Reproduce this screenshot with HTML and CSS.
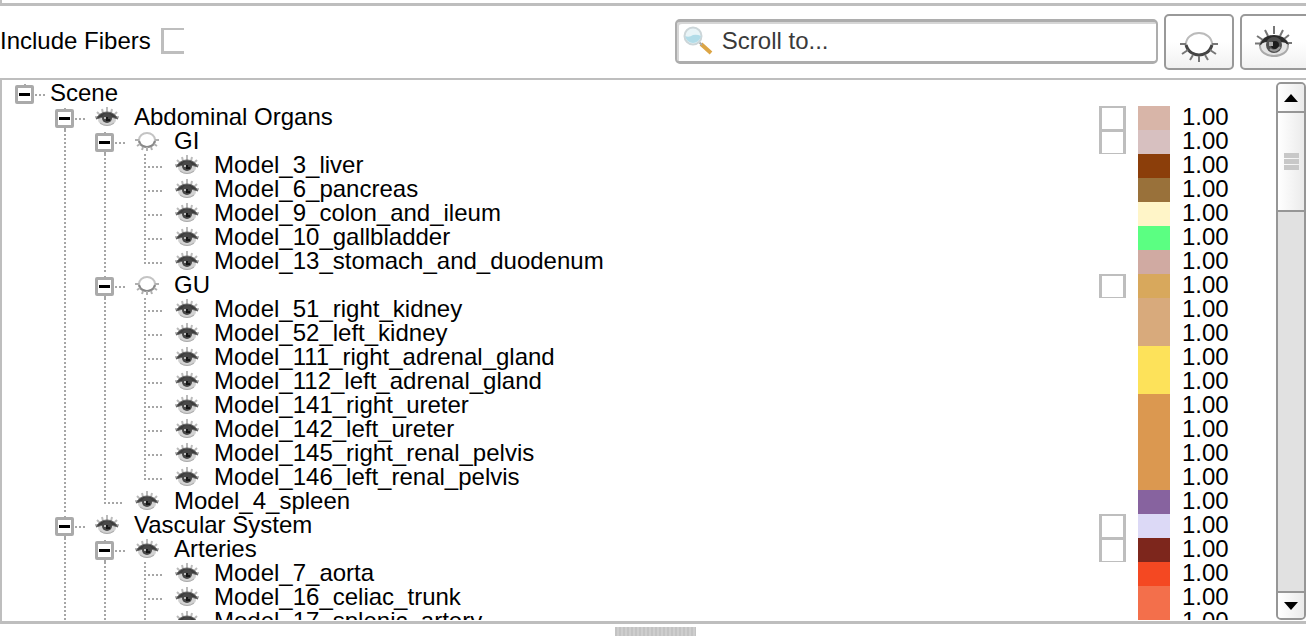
FILE: index.html
```
<!DOCTYPE html>
<html lang="en">
<head>
<meta charset="utf-8">
<title>Scene tree</title>
<link rel="stylesheet" href="styles.css">
</head>
<body>
<svg class="defs" aria-hidden="true">
  <symbol id="eye-large" viewBox="0 0 38 32">
    <ellipse cx="20" cy="20" rx="14" ry="10" fill="#e4e4e4" stroke="#aaa" stroke-width="2"/>
    <path d="M1 17.500h7M3 10l6 4M11 4l3 6M20 0v8M29 4l-3 6M35 9l-5 4M32 17h6" stroke="#777" stroke-width="2"/>
    <path d="M5 20 Q9 9 20 9 Q31 9 35 19 Q31 16 27 16 H13 Q9 16 5 20Z" fill="#2b2b2b"/>
    <circle cx="20" cy="19" r="8" fill="#505050"/>
    <circle cx="21" cy="19" r="4" fill="#1c1c1c"/>
    <path d="M15 16h4v4h-4z" fill="#aaa"/>
    <path d="M16 23 Q21 27 26 21" fill="none" stroke="#999" stroke-width="2"/>
  </symbol>
  <symbol id="closed-large" viewBox="0 0 38 32">
    <ellipse cx="19" cy="13" rx="13" ry="11" fill="#fff" stroke="#bbb" stroke-width="2"/>
    <path d="M6 14 Q8 20 12 22 Q19 26 26 22 Q30 20 32 14" fill="none" stroke="#444" stroke-width="3"/>
    <path d="M0 13h6M32 13h6M2 23l6-4M36 23l-6-4M10 29l3-5M28 29l-3-5M19 25v6" stroke="#777" stroke-width="2"/>
  </symbol>
  <symbol id="eye" viewBox="0 0 24 20">
    <ellipse cx="12" cy="13" rx="9" ry="6" fill="#d2d2d2"/>
    <path d="M0 10h4M2 5l3 3M7 2l1 4M12 0v5M17 2l-1 4M22 5l-3 3M20 10h4" stroke="#bbb" stroke-width="2"/>
    <path d="M1 12 Q5 5 12 5 Q19 5 23 12 Q18 10 12 10 Q6 10 1 12Z" fill="#3c3c3c" stroke="#666"/>
    <circle cx="12" cy="11" r="5" fill="#484848"/>
    <path d="M12 10v3h3" fill="none" stroke="#161616" stroke-width="2"/>
    <path d="M9 10h2v2H9z" fill="#bbb"/>
    <path d="M5 16 Q12 21 19 16" fill="none" stroke="#aaa"/>
  </symbol>
  <symbol id="closed" viewBox="0 0 24 20">
    <ellipse cx="12" cy="9" rx="8" ry="7" fill="#fff" stroke="#c4c4c4" stroke-width="2"/>
    <path d="M4 10 Q5 14 8 15 Q12 17 16 15 Q19 14 20 10" fill="none" stroke="#888" stroke-width="2"/>
    <path d="M0 9h4M20 9h4M2 15l3-2M22 15l-3-2M7 19l1-3M17 19l-1-3M12 16v4" stroke="#b0b0b0" stroke-width="2"/>
  </symbol>
</svg>

<div class="upper-panel"></div>

<header class="toolbar">
  <label class="fibers">Include Fibers <input type="checkbox" class="fibers-box"></label>
  <div class="search">
    <svg class="lens" viewBox="0 0 30 30" aria-hidden="true">
      <path d="M18 18 L28 27" stroke="#dca545" stroke-width="4"/>
      <path d="M15 15 L19 19" stroke="#aaa" stroke-width="2"/>
      <circle cx="10" cy="10" r="8.500" fill="#e9f4f7" stroke="#ccd6d9" stroke-width="2"/>
      <path d="M2 10 Q6 12 10 9 Q14 8 18 10 Q16 17 10 17 Q4 17 2 10Z" fill="#b2dce8"/>
    </svg>
    <input type="text" class="search-input" placeholder="Scroll to..." aria-label="Scroll to">
  </div>
  <button class="tool" aria-label="Hide all"><svg class="tool-icon lower"><use href="#closed-large"/></svg></button>
  <button class="tool last" aria-label="Show all"><svg class="tool-icon"><use href="#eye-large"/></svg></button>
</header>

<main class="scene">
  <ul class="tree" role="tree">
    <li class="row"><button class="cell node root" aria-label="Collapse"></button><span class="name scene-name">Scene</span></li>
    <li class="row"><i class="cell"></i><button class="cell node" aria-label="Collapse"></button><svg class="eye"><use href="#eye"/></svg><span class="name">Abdominal Organs</span><input type="checkbox" class="pick" aria-label="Abdominal Organs"><i class="swatch organs"></i><span class="opacity">1.00</span></li>
    <li class="row"><i class="cell"></i><i class="cell line"></i><button class="cell node" aria-label="Collapse"></button><svg class="eye"><use href="#closed"/></svg><span class="name">GI</span><input type="checkbox" class="pick" aria-label="GI"><i class="swatch gi"></i><span class="opacity">1.00</span></li>
    <li class="row"><i class="cell"></i><i class="cell line"></i><i class="cell line"></i><i class="cell tee"></i><svg class="eye"><use href="#eye"/></svg><span class="name">Model_3_liver</span><i class="swatch liver"></i><span class="opacity">1.00</span></li>
    <li class="row"><i class="cell"></i><i class="cell line"></i><i class="cell line"></i><i class="cell tee"></i><svg class="eye"><use href="#eye"/></svg><span class="name">Model_6_pancreas</span><i class="swatch pancreas"></i><span class="opacity">1.00</span></li>
    <li class="row"><i class="cell"></i><i class="cell line"></i><i class="cell line"></i><i class="cell tee"></i><svg class="eye"><use href="#eye"/></svg><span class="name">Model_9_colon_and_ileum</span><i class="swatch colon"></i><span class="opacity">1.00</span></li>
    <li class="row"><i class="cell"></i><i class="cell line"></i><i class="cell line"></i><i class="cell tee"></i><svg class="eye"><use href="#eye"/></svg><span class="name">Model_10_gallbladder</span><i class="swatch gallbladder"></i><span class="opacity">1.00</span></li>
    <li class="row"><i class="cell"></i><i class="cell line"></i><i class="cell line"></i><i class="cell elbow"></i><svg class="eye"><use href="#eye"/></svg><span class="name">Model_13_stomach_and_duodenum</span><i class="swatch stomach"></i><span class="opacity">1.00</span></li>
    <li class="row"><i class="cell"></i><i class="cell line"></i><button class="cell node" aria-label="Collapse"></button><svg class="eye"><use href="#closed"/></svg><span class="name">GU</span><input type="checkbox" class="pick" aria-label="GU"><i class="swatch gu"></i><span class="opacity">1.00</span></li>
    <li class="row"><i class="cell"></i><i class="cell line"></i><i class="cell line"></i><i class="cell tee"></i><svg class="eye"><use href="#eye"/></svg><span class="name">Model_51_right_kidney</span><i class="swatch kidney"></i><span class="opacity">1.00</span></li>
    <li class="row"><i class="cell"></i><i class="cell line"></i><i class="cell line"></i><i class="cell tee"></i><svg class="eye"><use href="#eye"/></svg><span class="name">Model_52_left_kidney</span><i class="swatch kidney"></i><span class="opacity">1.00</span></li>
    <li class="row"><i class="cell"></i><i class="cell line"></i><i class="cell line"></i><i class="cell tee"></i><svg class="eye"><use href="#eye"/></svg><span class="name">Model_111_right_adrenal_gland</span><i class="swatch adrenal"></i><span class="opacity">1.00</span></li>
    <li class="row"><i class="cell"></i><i class="cell line"></i><i class="cell line"></i><i class="cell tee"></i><svg class="eye"><use href="#eye"/></svg><span class="name">Model_112_left_adrenal_gland</span><i class="swatch adrenal"></i><span class="opacity">1.00</span></li>
    <li class="row"><i class="cell"></i><i class="cell line"></i><i class="cell line"></i><i class="cell tee"></i><svg class="eye"><use href="#eye"/></svg><span class="name">Model_141_right_ureter</span><i class="swatch ureter"></i><span class="opacity">1.00</span></li>
    <li class="row"><i class="cell"></i><i class="cell line"></i><i class="cell line"></i><i class="cell tee"></i><svg class="eye"><use href="#eye"/></svg><span class="name">Model_142_left_ureter</span><i class="swatch ureter"></i><span class="opacity">1.00</span></li>
    <li class="row"><i class="cell"></i><i class="cell line"></i><i class="cell line"></i><i class="cell tee"></i><svg class="eye"><use href="#eye"/></svg><span class="name">Model_145_right_renal_pelvis</span><i class="swatch ureter"></i><span class="opacity">1.00</span></li>
    <li class="row"><i class="cell"></i><i class="cell line"></i><i class="cell line"></i><i class="cell elbow"></i><svg class="eye"><use href="#eye"/></svg><span class="name">Model_146_left_renal_pelvis</span><i class="swatch ureter"></i><span class="opacity">1.00</span></li>
    <li class="row"><i class="cell"></i><i class="cell line"></i><i class="cell elbow"></i><svg class="eye"><use href="#eye"/></svg><span class="name">Model_4_spleen</span><i class="swatch spleen"></i><span class="opacity">1.00</span></li>
    <li class="row"><i class="cell"></i><button class="cell node" aria-label="Collapse"></button><svg class="eye"><use href="#eye"/></svg><span class="name">Vascular System</span><input type="checkbox" class="pick" aria-label="Vascular System"><i class="swatch vascular"></i><span class="opacity">1.00</span></li>
    <li class="row"><i class="cell"></i><i class="cell line"></i><button class="cell node" aria-label="Collapse"></button><svg class="eye"><use href="#eye"/></svg><span class="name">Arteries</span><input type="checkbox" class="pick" aria-label="Arteries"><i class="swatch arteries"></i><span class="opacity">1.00</span></li>
    <li class="row"><i class="cell"></i><i class="cell line"></i><i class="cell line"></i><i class="cell tee"></i><svg class="eye"><use href="#eye"/></svg><span class="name">Model_7_aorta</span><i class="swatch aorta"></i><span class="opacity">1.00</span></li>
    <li class="row"><i class="cell"></i><i class="cell line"></i><i class="cell line"></i><i class="cell tee"></i><svg class="eye"><use href="#eye"/></svg><span class="name">Model_16_celiac_trunk</span><i class="swatch celiac"></i><span class="opacity">1.00</span></li>
    <li class="row"><i class="cell"></i><i class="cell line"></i><i class="cell line"></i><i class="cell tee"></i><svg class="eye"><use href="#eye"/></svg><span class="name">Model_17_splenic_artery</span><i class="swatch celiac"></i><span class="opacity">1.00</span></li>
  </ul>
  <div class="scrollbar">
    <button class="arrow up" aria-label="Scroll up"><svg class="arrow-icon" viewBox="0 0 14 8"><path d="M7 0L14 8H0Z"/></svg></button>
    <div class="thumb"><i class="ridge"></i><i class="ridge"></i><i class="ridge"></i></div>
    <div class="track"></div>
    <button class="arrow down" aria-label="Scroll down"><svg class="arrow-icon" viewBox="0 0 14 8"><path d="M0 0H14L7 8Z"/></svg></button>
  </div>
</main>
<footer class="splitter"><div class="grip"></div></footer>
</body>
</html>
```
FILE: styles.css
```
*, *::before { box-sizing: border-box; }
body {
  margin: 0;
  height: 100vh;
  display: flex;
  flex-direction: column;
  overflow: hidden;
  background: #fff;
  color: #000;
  font: 24px/22px "Liberation Sans", Arial, sans-serif;
}
button { padding: 0; border: 0; background: none; font: inherit; }
input { margin: 0; }
.defs { display: none; }

.upper-panel { flex: none; height: 6px; border: solid #bebebe; border-width: 0 0 3px 2px; }

/* toolbar */
.toolbar { flex: none; display: flex; align-items: center; gap: 6px; height: 72px; }
.fibers { display: flex; align-items: center; gap: 10px; margin: 0 auto 2px 0; }
.fibers-box {
  appearance: none;
  width: 23px;
  height: 26px;
  border: solid #bebebe;
  border-width: 2px 0 3px 3px;
}
.search {
  display: flex;
  align-items: center;
  width: 37%;
  height: 45px;
  margin-bottom: 2px;
  padding: 0 6px;
  border: solid #adadad;
  border-width: 3px 2px;
  border-radius: 5px;
  box-shadow: inset 2px 2px 0 #d6d6d6;
}
.lens { flex: none; width: 30px; height: 30px; }
.search-input {
  flex: 1;
  min-width: 0;
  height: 30px;
  margin-left: 9px;
  padding: 0;
  border: 0;
  outline: 0;
  background: none;
  font: inherit;
}
.search-input::placeholder { color: #3a3a3a; opacity: 1; }
.tool {
  flex: none;
  display: flex;
  align-items: center;
  justify-content: center;
  width: 70px;
  height: 56px;
  border: 2px solid #999;
  border-radius: 5px;
  background: linear-gradient(#fff 50%, #f1f1f1);
}
.tool.last { margin-right: -4px; }
.tool-icon { width: 38px; height: 32px; margin-right: 4px; }
.tool-icon.lower { margin: 10px 0 0; }

/* scene panel */
.scene {
  flex: 1;
  min-height: 0;
  display: flex;
  padding: 2px 0 1px;
  border: solid #bebebe;
  border-width: 2px 0 3px 2px;
}
.tree { flex: 1; min-width: 0; margin: 0; padding: 0 0 0 3px; overflow: hidden; list-style: none; }
.row { display: flex; height: 24px; }

/* 40px indent cells carrying the dotted guide lines */
.cell { flex: none; width: 40px; height: 24px; background-repeat: no-repeat; }
.line, .tee, .elbow, .node {
  --down: repeating-linear-gradient(#a6a6a6 0 2px, transparent 2px 4px);
  --across: repeating-linear-gradient(90deg, #a6a6a6 0 2px, transparent 2px 4px);
}
.line { background-image: var(--down); background-size: 2px 24px; background-position: 19px 0; }
.tee { background-image: var(--down), var(--across); background-size: 2px 24px, 20px 2px; background-position: 19px 0, 19px 12px; }
.elbow { background-image: var(--down), var(--across); background-size: 2px 14px, 20px 2px; background-position: 19px 0, 19px 12px; }
.node {
  display: flex;
  padding: 3px 0 0 10px;
  background-image: var(--down), var(--across);
  background-size: 2px 24px, 10px 2px;
  background-position: 19px 2px, 30px 12px;
}
.node.root { background-size: 2px 12px, 10px 2px; }
.node::before {
  content: "";
  width: 19px;
  height: 19px;
  border: 3px solid #aaa;
  border-radius: 2px;
  background: linear-gradient(#000, #000) center / 11px 3px no-repeat #fff;
}
.eye { flex: none; width: 24px; height: 20px; margin: 1px 6px 0 10px; }
.name { flex: 1; min-width: 0; padding-left: 9px; white-space: nowrap; }
.scene-name { padding-left: 5px; }
.pick {
  appearance: none;
  flex: none;
  width: 27px;
  height: 24px;
  border: solid #bebebe;
  border-width: 2px 3px 1px;
}
.swatch { flex: none; width: 32px; height: 24px; margin: 0 12px; }
.opacity { flex: none; width: 94px; }

.organs { background: #d8b5a8; }
.gi { background: #d7c0c0; }
.liver { background: #8b3e0a; }
.pancreas { background: #99713a; }
.colon { background: #fff5c8; }
.gallbladder { background: #5bff82; }
.stomach { background: #d0aaa2; }
.gu { background: #d8a85c; }
.kidney { background: #d8aa7c; }
.adrenal { background: #fde25a; }
.ureter { background: #db9850; }
.spleen { background: #87639f; }
.vascular { background: #dcd9f6; }
.arteries { background: #7d261c; }
.aorta { background: #f44822; }
.celiac { background: #f36f4b; }

/* scrollbar */
.scrollbar {
  flex: none;
  display: flex;
  flex-direction: column;
  width: 30px;
  border: 2px solid #969696;
  border-radius: 5px;
  background: #e1e1e1;
  overflow: hidden;
}
.arrow, .thumb { display: flex; align-items: center; justify-content: center; background: linear-gradient(90deg, #fff, #ebebeb); }
.arrow { height: 27px; flex: none; }
.arrow-icon { width: 14px; height: 8px; }
.thumb { flex: none; flex-direction: column; gap: 1px; height: 101px; border: solid #969696; border-width: 2px 0; }
.ridge { width: 15px; height: 5px; background: #c8c8c8; }
.track { flex: 1; }
.down { border-top: 2px solid #969696; }

.splitter { flex: none; height: 12px; padding: 3px 0 0 4px; }
.grip {
  width: 81px;
  height: 9px;
  margin: 0 auto;
  background: repeating-linear-gradient(90deg, #c3c3c3 0 2px, #cecece 2px 4px);
}
```
